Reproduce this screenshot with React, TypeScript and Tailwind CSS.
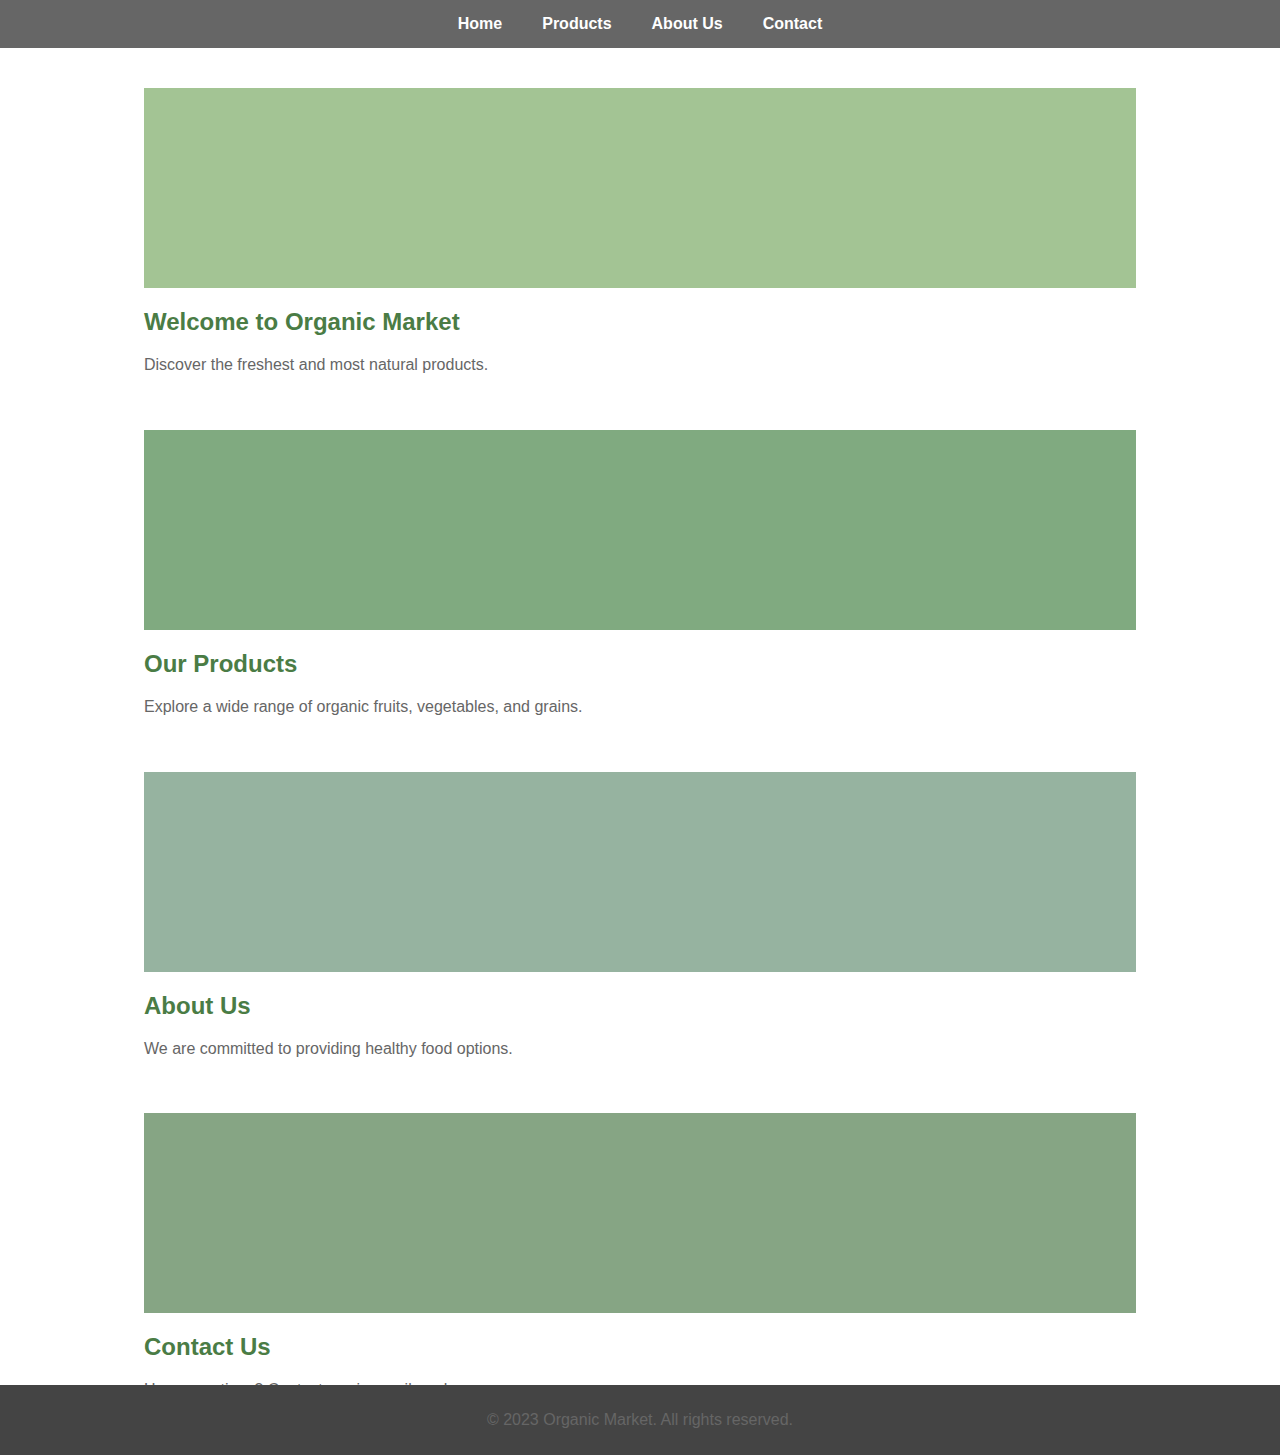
const sections = [
  {
    title: 'Welcome to Organic Market',
    text: 'Discover the freshest and most natural products.',
    color: 'bg-[#a3c494]',
  },
  {
    title: 'Our Products',
    text: 'Explore a wide range of organic fruits, vegetables, and grains.',
    color: 'bg-[#80aa80]',
  },
  {
    title: 'About Us',
    text: 'We are committed to providing healthy food options.',
    color: 'bg-[#96b3a0]',
  },
  {
    title: 'Contact Us',
    text: 'Have questions? Contact us via email or phone.',
    color: 'bg-[#86a584]',
  },
];

const navLinks = ['Home', 'Products', 'About Us', 'Contact'];

const App = () => {
  return (
    <div className="min-h-screen bg-white font-['Liberation_Sans',Arial,sans-serif]">
      <nav className="h-12 bg-[#666666] flex justify-center items-center gap-10">
        {navLinks.map((link) => (
          <a
            key={link}
            href="#"
            className="text-white font-bold text-base leading-[18px]"
          >
            {link}
          </a>
        ))}
      </nav>

      <main className="w-[992px] mx-auto pt-10 pb-24 flex flex-col gap-[55.8px]">
        {sections.map((section) => (
          <section key={section.title}>
            <div className={`h-[200px] w-full ${section.color}`} />
            <h2 className="mt-5 text-2xl leading-7 font-bold text-[#4a7c45]">
              {section.title}
            </h2>
            <p className="mt-5 text-base leading-[18px] text-[#666666]">
              {section.text}
            </p>
          </section>
        ))}
      </main>

      <footer className="fixed bottom-0 left-0 right-0 h-[70px] bg-[#444444] flex items-center justify-center">
        <p className="text-base text-[#666666]">
          © 2023 Organic Market. All rights reserved.
        </p>
      </footer>
    </div>
  );
};

export default App;
